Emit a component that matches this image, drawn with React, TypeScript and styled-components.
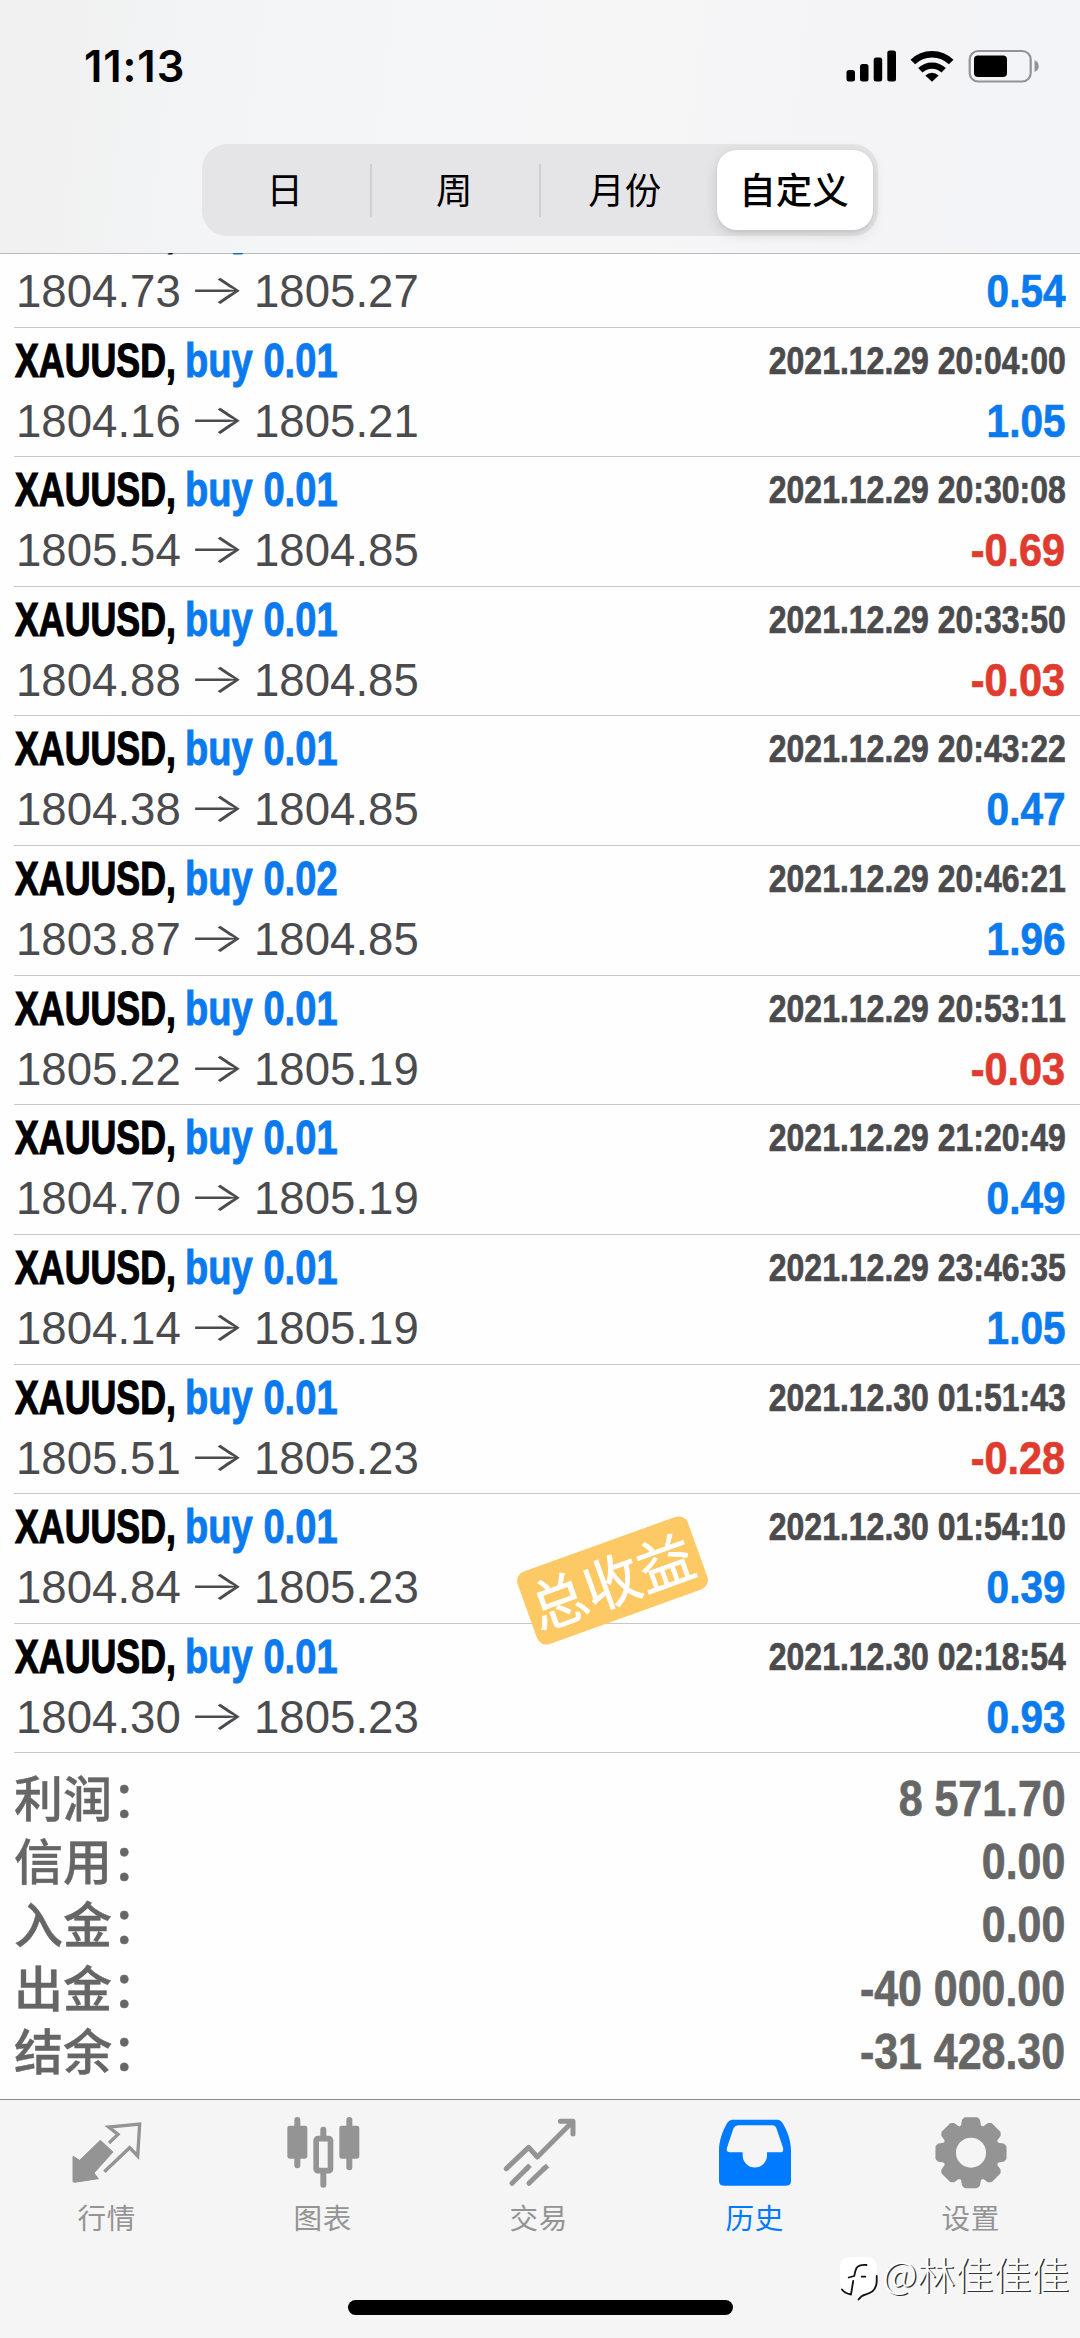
import React from 'react';
import styled, { createGlobalStyle } from 'styled-components';

const latin = "'Liberation Sans', 'Noto Sans CJK SC', Arial, sans-serif";
const cjk = "'Noto Sans CJK SC', 'Liberation Sans', sans-serif";

const GlobalStyle = createGlobalStyle`
  * { box-sizing: border-box; }
  html, body { margin: 0; padding: 0; background: #fff; }
  body { font-family: ${latin}; font-kerning: none; }
`;

const Screen = styled.div`
  width: 1080px;
  height: 2338px;
  display: flex;
  flex-direction: column;
  background: #fefefe;
  overflow: hidden;
  position: relative;
`;

const Header = styled.header`
  flex: none;
  height: 254px;
  display: flex;
  flex-direction: column;
  align-items: center;
  background: linear-gradient(97deg, #f0f0f0 0%, #f4f5f7 26%, #f6f6f7 55%, #f4f4f6 80%, #f3f4f8 100%);
  background-clip: padding-box;
  border-bottom: 1px solid rgba(60, 60, 67, 0.34);
  z-index: 1;
`;

const StatusBar = styled.div`
  width: 100%;
  height: 144px;
  flex: none;
  padding: 0 41px 0 84px;
  display: flex;
  justify-content: space-between;
`;

const Clock = styled.div`
  font: 600 43.5px/60px Inter, sans-serif;
  letter-spacing: 0.9px;
  padding-top: 36px;
  color: #000;
`;

const StatusIcons = styled.svg`
  display: block;
  width: 194px;
  height: 34px;
  margin-top: 49px;
`;

const Segments = styled.div`
  width: 676px;
  height: 92px;
  padding: 6px 5px 6px 0;
  border-radius: 25px;
  background: #e5e5e8;
  display: flex;
  align-items: center;
`;

const Segment = styled.button<{ $active?: boolean; $divider?: boolean }>`
  appearance: none;
  border: 0;
  padding: 0 2px 2px 0;
  margin: 0 0 0 ${(p) => (p.$active ? 'auto' : '0')};
  flex: 0 0 ${(p) => (p.$active ? 156 : 169.5)}px;
  height: ${(p) => (p.$active ? '80px' : '53px')};
  border-radius: ${(p) => (p.$active ? '20px' : '0')};
  border-right: ${(p) => (p.$divider ? '2px solid #cfcfd3' : '0')};
  background: ${(p) => (p.$active ? '#fff' : 'transparent')};
  box-shadow: ${(p) => (p.$active ? '0 4px 14px rgba(0,0,0,.13), 0 2px 3px rgba(0,0,0,.05)' : 'none')};
  color: #000;
  font-family: ${cjk};
  font-size: 36.5px;
  font-weight: ${(p) => (p.$active ? 500 : 400)};
  line-height: 50px;
`;

const History = styled.main`
  height: 1846px;
  margin-top: -1px;
  flex: none;
  display: flex;
  flex-direction: column;
  justify-content: flex-end;
  overflow: hidden;
`;

const Deal = styled.article`
  flex: none;
  height: 129.63px;
  margin-left: 14px;
  padding: 5px 14.5px 0 0.7px;
  border-bottom: 1px solid #c8c8ca;
  position: relative;
`;

const Line = styled.div<{ $height: number; $cut?: number }>`
  height: ${(p) => p.$height}px;
  line-height: ${(p) => p.$height}px;
  clip-path: ${(p) => (p.$cut ? `inset(0 0 ${p.$cut}px 0)` : 'none')};
  display: flex;
  align-items: center;
  white-space: nowrap;
`;

const Condensed = styled.span<{ $x: number; $size: number; $color: string; $w?: number; $right?: boolean; $stroke?: number }>`
  display: inline-block;
  width: ${(p) => (p.$w ? `${p.$w}px` : 'auto')};
  font-size: ${(p) => p.$size}px;
  font-weight: 700;
  color: ${(p) => p.$color};
  -webkit-text-stroke: ${(p) => p.$stroke ?? 0.7}px ${(p) => p.$color};
  transform: scaleX(${(p) => p.$x});
  transform-origin: ${(p) => (p.$right ? 'right' : 'left')} center;
  margin-left: ${(p) => (p.$right ? 'auto' : '0')};
  white-space: pre;
`;

const Price = styled.span<{ $w: number }>`
  flex: none;
  width: ${(p) => p.$w}px;
  font-size: 46.8px;
  color: #4b4b4e;
  transform: translateX(1px) scaleX(0.974);
  transform-origin: left center;
`;

const Arrow = styled.span`
  flex: none;
  width: 65px;
  font-family: Inter, sans-serif;
  font-size: 41px;
  font-weight: 300;
  padding-bottom: 4px;
  color: #4b4b4e;
  transform: translateX(-0.5px) scaleX(1.49);
  transform-origin: left center;
`;

const Sticker = styled.div`
  position: absolute;
  left: 508px;
  top: 48px;
  width: 181px;
  height: 77px;
  border-radius: 10px;
  background: #fdc965;
  color: #fff;
  font: 400 56.5px/72px ${cjk};
  -webkit-text-stroke: 0.7px #fff;
  text-align: center;
  white-space: nowrap;
  padding-right: 2px;
  transform: rotate(-19.8deg);
  z-index: 2;
`;

const Summary = styled.section`
  flex: none;
  height: 345.6px;
  padding: 14px 14.5px 0 14px;
`;

const SummaryRow = styled.div`
  height: 63.35px;
  line-height: 63px;
  display: flex;
  align-items: center;
`;

const SummaryLabel = styled.span`
  font-family: ${cjk};
  font-size: 49px;
  font-weight: 500;
  line-height: 56px;
  color: #666;
  -webkit-text-stroke: 0.4px #666;
  padding-bottom: 7px;
`;

const TabBar = styled.nav`
  flex: none;
  height: 239px;
  border-top: 1px solid #8c8c8d;
  background: #f5f5f5;
  position: relative;
  display: flex;
  padding-top: 13px;
`;

const Tab = styled.a<{ $active?: boolean }>`
  flex: 0 0 216px;
  padding-right: 2.6px;
  display: flex;
  flex-direction: column;
  align-items: center;
  color: ${(p) => (p.$active ? '#007aff' : '#949494')};
  font: 400 28.6px/44px ${cjk};
  letter-spacing: 0.6px;
`;

const TabIcon = styled.svg`
  display: block;
  width: 80px;
  height: 80px;
  margin-bottom: 2px;
`;

const HomeIndicator = styled.div`
  position: absolute;
  left: 348px;
  bottom: 23px;
  width: 385px;
  height: 15px;
  border-radius: 8px;
  background: #000;
`;

const Watermark = styled.div`
  position: absolute;
  right: 11px;
  bottom: 34px;
  height: 50px;
  display: flex;
  align-items: flex-start;
  gap: 3px;
  color: #fff;
  font: 300 38px/50px ${cjk};
  text-shadow: 1.5px 1px 0 #333;
`;

const WatermarkLabel = styled.span`
  margin-top: -6px;
`;

const WatermarkLogo = styled.svg`
  width: 40px;
  height: 46px;
  margin-top: 2px;
`;

type DealData = [prevPrice: string, price: string, time: string, result: string, lots?: string];

const deals: DealData[] = [
  ['1804.73', '1805.27', '', '0.54'],
  ['1804.16', '1805.21', '2021.12.29 20:04:00', '1.05'],
  ['1805.54', '1804.85', '2021.12.29 20:30:08', '-0.69'],
  ['1804.88', '1804.85', '2021.12.29 20:33:50', '-0.03'],
  ['1804.38', '1804.85', '2021.12.29 20:43:22', '0.47'],
  ['1803.87', '1804.85', '2021.12.29 20:46:21', '1.96', '0.02'],
  ['1805.22', '1805.19', '2021.12.29 20:53:11', '-0.03'],
  ['1804.70', '1805.19', '2021.12.29 21:20:49', '0.49'],
  ['1804.14', '1805.19', '2021.12.29 23:46:35', '1.05'],
  ['1805.51', '1805.23', '2021.12.30 01:51:43', '-0.28'],
  ['1804.84', '1805.23', '2021.12.30 01:54:10', '0.39'],
  ['1804.30', '1805.23', '2021.12.30 02:18:54', '0.93'],
];

const totals = [
  ['利润：', '8 571.70'],
  ['信用：', '0.00'],
  ['入金：', '0.00'],
  ['出金：', '-40 000.00'],
  ['结余：', '-31 428.30'],
];

const STICKER_ROW = 10;

function gearPath() {
  const pts: string[] = [];
  for (let k = 0; k < 8; k++) {
    const profile: [number, number][] = [[-9.5, 103], [9.5, 103], [13, 99], [17, 85], [22.5, 80], [28, 85], [32, 99]];
    for (const [deg, r] of profile) {
      const a = ((k * 45 + deg - 90) * Math.PI) / 180;
      pts.push(`${(573 + r * Math.cos(a)).toFixed(1)} ${(219 + r * Math.sin(a)).toFixed(1)}`);
    }
  }
  return `M${pts.join('L')}ZM573 169a50 50 0 1 0 0 100a50 50 0 1 0 0-100Z`;
}

const QuotesIcon = () => (
  <TabIcon viewBox="200 100 240 240">
    <path fill="currentColor" stroke="currentColor" strokeWidth="3" strokeLinejoin="round" d="M218 230L238 242L300 182L338 217L281 280L294 297L222 308Q218 308 218 304Z" />
    <path fill="none" stroke="currentColor" strokeWidth="10" d="M326 190L353 164L325 142L418 133L412 229L388 204L312 276" />
  </TabIcon>
);

const ChartIcon = () => (
  <TabIcon viewBox="848 100 240 240" fill="currentColor">
    <rect x="882" y="112" width="18" height="154" rx="9" />
    <rect x="861" y="138" width="60" height="99" rx="7" />
    <rect x="1038" y="112" width="18" height="160" rx="9" />
    <rect x="1017" y="138" width="60" height="99" rx="7" />
    <rect x="960" y="141" width="18" height="40" rx="9" />
    <rect x="960" y="270" width="18" height="54" rx="9" />
    <rect x="947.5" y="177" width="43" height="96" rx="5" fill="none" stroke="currentColor" strokeWidth="17" />
  </TabIcon>
);

const TradeIcon = () => (
  <TabIcon viewBox="295 100 240 240" fill="none" stroke="currentColor" strokeWidth="15" strokeLinejoin="round">
    <path strokeLinecap="round" d="M317 267L384 203L410 232L512 130M479 125H517V163" />
    <path strokeLinecap="round" d="M334 311L380 265M385 311L432 265" />
    <path strokeLinecap="butt" d="M375 270L388 257M427 270L441 258" />
  </TabIcon>
);

const HistoryIcon = () => (
  <TabIcon viewBox="945 100 240 240" fill="currentColor">
    <path
      fillRule="evenodd"
      d="M996 120H1134Q1142 121 1147 129C1163 154 1173 185 1173 212V304Q1173 318 1159 318H971Q957 318 957 304V212C957 185 967 154 982 129Q987 121 996 120ZM1014 137Q1004 138 1000 147L981 204Q977 218 990 218H1028V227A36.5 36.5 0 0 0 1101 227V218H1141Q1152 218 1149 204L1130 148Q1127 138 1117 137Z"
    />
  </TabIcon>
);

const SettingsIcon = () => (
  <TabIcon viewBox="453 100 240 240">
    <path fill="currentColor" stroke="currentColor" strokeWidth="10" strokeLinejoin="round" fillRule="evenodd" d={gearPath()} />
  </TabIcon>
);

const tabs = [
  { label: '行情', Icon: QuotesIcon },
  { label: '图表', Icon: ChartIcon },
  { label: '交易', Icon: TradeIcon },
  { label: '历史', Icon: HistoryIcon, active: true },
  { label: '设置', Icon: SettingsIcon },
];

export default function App() {
  return (
    <Screen lang="zh-CN">
      <GlobalStyle />
      <Header>
        <StatusBar>
          <Clock>11:13</Clock>
          <StatusIcons viewBox="845 49 194 34">
            <rect x="846.5" y="70" width="8.5" height="11.5" rx="2.5" />
            <rect x="860" y="64" width="8.5" height="17.5" rx="2.5" />
            <rect x="873.7" y="57.5" width="8.5" height="24" rx="2.5" />
            <rect x="887.3" y="50.5" width="8.7" height="31" rx="2.5" />
            <path fill="none" stroke="#000" strokeWidth="6.6" d="M912.8 62A27.5 27.5 0 0 1 951.2 62" />
            <path fill="none" stroke="#000" strokeWidth="6.2" d="M920.3 70.3A16.8 16.8 0 0 1 943.7 70.3" />
            <path d="M932 81.8L925.3 75.6Q932 70 938.7 75.6Z" />
            <rect x="969.7" y="51" width="61" height="30.5" rx="8.5" fill="none" stroke="#939395" strokeWidth="2.2" />
            <rect x="974" y="55.5" width="33" height="21.5" rx="4" />
            <path fill="#939395" d="M1034.5 60.3Q1038.7 62 1038.7 66.2Q1038.7 70.4 1034.5 72Z" />
          </StatusIcons>
        </StatusBar>
        <Segments>
          <Segment $divider>日</Segment>
          <Segment $divider>周</Segment>
          <Segment>月份</Segment>
          <Segment $active>自定义</Segment>
        </Segments>
      </Header>

      <History>
        {deals.map(([from, to, time, result, lots = '0.01'], i) => (
          <Deal key={i}>
            <Line $height={56} $cut={i === 0 ? 4.5 : undefined}>
              <Condensed $x={0.753} $size={47.5} $color="#000" $w={170} $stroke={1.2}>XAUUSD,</Condensed>
              <Condensed $x={0.803} $size={47.5} $color="#0a7aee" $stroke={0.9}>{`buy ${lots}`}</Condensed>
              {time && <Condensed $x={0.842} $size={38} $color="#4b4b4e" $right>{time}</Condensed>}
            </Line>
            <Line $height={64}>
              <Price $w={173}>{from}</Price>
              <Arrow>→</Arrow>
              <Price $w={170}>{to}</Price>
              <Condensed
                $x={result.startsWith('-') ? 0.882 : 0.862}
                $size={47}
                $color={result.startsWith('-') ? '#df3b2e' : '#0a7aee'}
                $right
              >
                {result}
              </Condensed>
            </Line>
            {i === STICKER_ROW && <Sticker>总收益</Sticker>}
          </Deal>
        ))}
        <Summary>
          {totals.map(([label, value]) => (
            <SummaryRow key={label}>
              <SummaryLabel>{label}</SummaryLabel>
              <Condensed $x={0.858} $size={50} $color="#666" $right>{value}</Condensed>
            </SummaryRow>
          ))}
        </Summary>
      </History>

      <TabBar>
        {tabs.map(({ label, Icon, active }) => (
          <Tab key={label} $active={active}>
            <Icon />
            {label}
          </Tab>
        ))}
        <HomeIndicator />
        <Watermark>
          <WatermarkLogo viewBox="0 0 40 46">
            <path fill="#fff" d="M12 1H27Q38 1 38 13V25Q38 36 27 38Q22 39 19 43Q17 41 18 38H12Q1 36 1 25V12Q1 1 12 1Z" />
            <path
              fill="none"
              stroke="#111"
              strokeWidth="1.8"
              strokeLinecap="round"
              strokeLinejoin="round"
              d="M27.5 9Q20 8.5 17.5 12Q16 15 15.3 20L9.7 21.5M22.7 20.7H26.3M14.2 25L12 38.5Q6 37.5 3 33.5M37.7 20V26Q37 36 27 38.3Q22 39.5 19.5 43.5"
            />
          </WatermarkLogo>
          <WatermarkLabel>@林佳佳佳</WatermarkLabel>
        </Watermark>
      </TabBar>
    </Screen>
  );
}
